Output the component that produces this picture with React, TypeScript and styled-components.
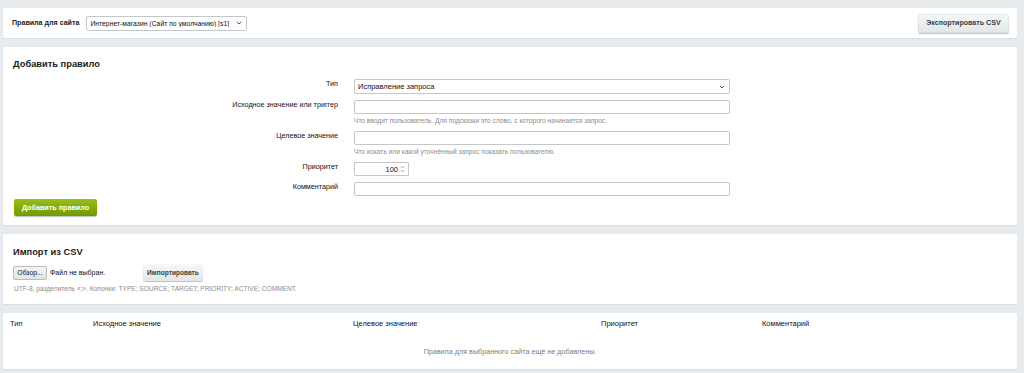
import { createGlobalStyle } from 'styled-components';
import styled from 'styled-components';
import type { FC, ReactNode } from 'react';

const GlobalStyle = createGlobalStyle`
  html, body {
    margin: 0;
    padding: 0;
    background: #e7ebed;
  }
  body {
    font-family: 'Liberation Sans', Arial, sans-serif;
    color: #000;
  }
  * {
    box-sizing: border-box;
  }
`;

const Chevron: FC = () => (
  <svg width="6" height="4" viewBox="0 0 6 4" fill="none">
    <path d="M0.8 0.8 L3 3 L5.2 0.8" stroke="#555" strokeWidth="1" />
  </svg>
);

const App: FC = () => {
  return (
    <>
      <GlobalStyle />
      <Page>
        <TopBar>
          <TopLeft>
            <TopLabel>Правила для сайта</TopLabel>
            <SelectBox $width={161} $height={15}>
              <NativeSelect $size={6.8} defaultValue="s1">
                <option value="s1">Интернет-магазин (Сайт по умолчанию) [s1]</option>
              </NativeSelect>
              <SelectArrow>
                <Chevron />
              </SelectArrow>
            </SelectBox>
          </TopLeft>
          <GrayButton>Экспортировать CSV</GrayButton>
        </TopBar>

        <Panel $pt={12} $pb={9}>
          <Title>Добавить правило</Title>
          <FormGrid>
            <FieldLabel>Тип</FieldLabel>
            <Field>
              <SelectBox $width={376} $height={15}>
                <NativeSelect $size={7.5} defaultValue="fix">
                  <option value="fix">Исправление запроса</option>
                </NativeSelect>
                <SelectArrow>
                  <Chevron />
                </SelectArrow>
              </SelectBox>
            </Field>

            <FieldLabel>Исходное значение или триггер</FieldLabel>
            <Field>
              <TextInput type="text" />
              <Hint>Что вводит пользователь. Для подсказки это слово, с которого начинается запрос.</Hint>
            </Field>

            <FieldLabel>Целевое значение</FieldLabel>
            <Field>
              <TextInput type="text" />
              <Hint>Что искать или какой уточнённый запрос показать пользователю.</Hint>
            </Field>

            <FieldLabel>Приоритет</FieldLabel>
            <Field>
              <NumberBox>
                <NumberValue>100</NumberValue>
                <Spinner>
                  <svg width="5" height="8" viewBox="0 0 5 8" fill="none">
                    <path d="M0.8 3 L2.5 1.2 L4.2 3" stroke="#999" strokeWidth="0.8" />
                    <path d="M0.8 5 L2.5 6.8 L4.2 5" stroke="#999" strokeWidth="0.8" />
                  </svg>
                </Spinner>
              </NumberBox>
            </Field>

            <FieldLabel>Комментарий</FieldLabel>
            <Field>
              <TextInput type="text" />
            </Field>
          </FormGrid>
          <GreenButton>Добавить правило</GreenButton>
        </Panel>

        <Panel $pt={13} $pb={11}>
          <Title>Импорт из CSV</Title>
          <ImportRow>
            <FileButton>Обзор...</FileButton>
            <FileName>Файл не выбран.</FileName>
            <ImportButton>Импортировать</ImportButton>
          </ImportRow>
          <CsvHint>UTF-8, разделитель «;». Колонки: TYPE; SOURCE; TARGET; PRIORITY; ACTIVE; COMMENT.</CsvHint>
        </Panel>

        <TablePanel>
          <HeadRow>
            <HeadCell>Тип</HeadCell>
            <HeadCell>Исходное значение</HeadCell>
            <HeadCell>Целевое значение</HeadCell>
            <HeadCell>Приоритет</HeadCell>
            <HeadCell>Комментарий</HeadCell>
          </HeadRow>
          <EmptyRow>Правила для выбранного сайта ещё не добавлены.</EmptyRow>
        </TablePanel>
      </Page>
    </>
  );
};

export default App;

const Page = styled.div`
  padding: 8px 7px 5px 3px;
  display: flex;
  flex-direction: column;
  gap: 9px;
`;

const Card = styled.div`
  background: #fff;
  border-radius: 2px;
  box-shadow: 0 1px 1px rgba(0, 0, 0, 0.06);
`;

const TopBar = styled(Card)`
  height: 30px;
  display: flex;
  align-items: center;
  justify-content: space-between;
  padding: 0 8px 0 9px;
`;

const TopLeft = styled.div`
  display: flex;
  align-items: center;
  gap: 7px;
`;

const TopLabel = styled.span`
  font-size: 7.1px;
  font-weight: bold;
  color: #222;
`;

const SelectBox = styled.div<{ $width: number; $height: number }>`
  position: relative;
  display: flex;
  width: ${(p) => p.$width}px;
  height: ${(p) => p.$height}px;
`;

const NativeSelect = styled.select<{ $size: number }>`
  appearance: none;
  display: block;
  width: 100%;
  height: 100%;
  margin: 0;
  padding: 0 14px 0 3px;
  border: 1px solid #c4c8ca;
  border-radius: 2px;
  background: #fff;
  font-family: 'Liberation Sans', Arial, sans-serif;
  font-size: ${(p) => p.$size}px;
  color: #111;
  outline: none;
`;

const SelectArrow = styled.span`
  position: absolute;
  right: 5px;
  top: 0;
  bottom: 0;
  display: flex;
  align-items: center;
  pointer-events: none;
`;

const GrayButton = styled.button`
  height: 19px;
  width: 91px;
  padding: 0;
  border: none;
  border-radius: 2px;
  background: linear-gradient(#f5f7f7, #e1e6e7);
  box-shadow: 0 1px 1px rgba(0, 0, 0, 0.25), inset 0 0 0 1px rgba(0, 0, 0, 0.04);
  font-family: 'Liberation Sans', Arial, sans-serif;
  font-size: 7.1px;
  font-weight: bold;
  color: #3a3f40;
`;

const Panel = styled(Card)<{ $pt: number; $pb: number }>`
  padding: ${(p) => p.$pt}px 10px ${(p) => p.$pb}px 11px;
`;

const Title = styled.div`
  font-size: 9.3px;
  line-height: 11px;
  font-weight: bold;
  color: #1c1c1c;
  margin-left: -1px;
`;

const FormGrid = styled.div`
  display: grid;
  grid-template-columns: 324px 376px;
  column-gap: 16px;
  row-gap: 6px;
  margin-top: 9px;
`;

const FieldLabel = styled.div`
  font-size: 7.2px;
  line-height: 10px;
  text-align: right;
  color: #111;
`;

const Field = styled.div`
  display: flex;
  flex-direction: column;
  align-items: flex-start;
`;

const TextInput = styled.input`
  display: block;
  width: 100%;
  height: 14px;
  margin: 0;
  padding: 0 3px;
  border: 1px solid #c4c8ca;
  border-radius: 2px;
  outline: none;
  background: #fff;
`;

const Hint = styled.div`
  margin-top: 2px;
  font-size: 6.6px;
  line-height: 9px;
  color: #8c8c8c;
`;

const NumberBox = styled.div`
  width: 55px;
  height: 14px;
  border: 1px solid #c4c8ca;
  border-radius: 1px;
  display: flex;
  align-items: center;
  justify-content: flex-end;
  gap: 2px;
  padding-right: 3px;
`;

const NumberValue = styled.span`
  font-size: 7.5px;
  color: #111;
`;

const Spinner = styled.span`
  display: flex;
`;

const GreenButton = styled.button`
  display: block;
  margin-top: 3px;
  width: 83px;
  height: 17px;
  padding: 0;
  border: none;
  border-radius: 2px;
  background: linear-gradient(#96be1c, #6f9a04);
  box-shadow: 0 1px 1px rgba(0, 0, 0, 0.25);
  font-family: 'Liberation Sans', Arial, sans-serif;
  font-size: 7.2px;
  font-weight: bold;
  color: #fff;
`;

const ImportRow = styled.div`
  display: flex;
  align-items: center;
  margin-top: 6px;
`;

const FileButton = styled.button`
  width: 34px;
  height: 14px;
  padding: 0;
  border: 1px solid #b9bcbd;
  border-radius: 2px;
  background: linear-gradient(#f4f4f4, #e4e4e4);
  font-family: 'Liberation Sans', Arial, sans-serif;
  font-size: 6.8px;
  color: #111;
  margin-left: -1px;
`;

const FileName = styled.span`
  font-size: 7px;
  color: #111;
  margin-left: 3px;
  width: 93px;
`;

const ImportButton = styled.button`
  height: 17px;
  width: 60px;
  padding: 0;
  border: none;
  border-radius: 2px;
  background: linear-gradient(#f7f8f8, #e3e6e7);
  box-shadow: 0 1px 1px rgba(0, 0, 0, 0.25);
  font-family: 'Liberation Sans', Arial, sans-serif;
  font-size: 6.6px;
  font-weight: bold;
  color: #3a3f40;
`;

const CsvHint = styled.div`
  margin-top: 3px;
  font-size: 6.6px;
  line-height: 9px;
  color: #8c8c8c;
`;

const TablePanel = styled(Card)`
  height: 56px;
  padding: 6px 7px 0;
`;

const HeadRow = styled.div`
  display: grid;
  grid-template-columns: 83px 260px 248px 161px 1fr;
`;

const HeadCell = styled.div<{ children?: ReactNode }>`
  font-size: 7.5px;
  line-height: 10px;
  color: #111;
`;

const EmptyRow = styled.div`
  margin-top: 18px;
  text-align: center;
  font-size: 7.2px;
  line-height: 10px;
  color: #7d7d7d;
`;
